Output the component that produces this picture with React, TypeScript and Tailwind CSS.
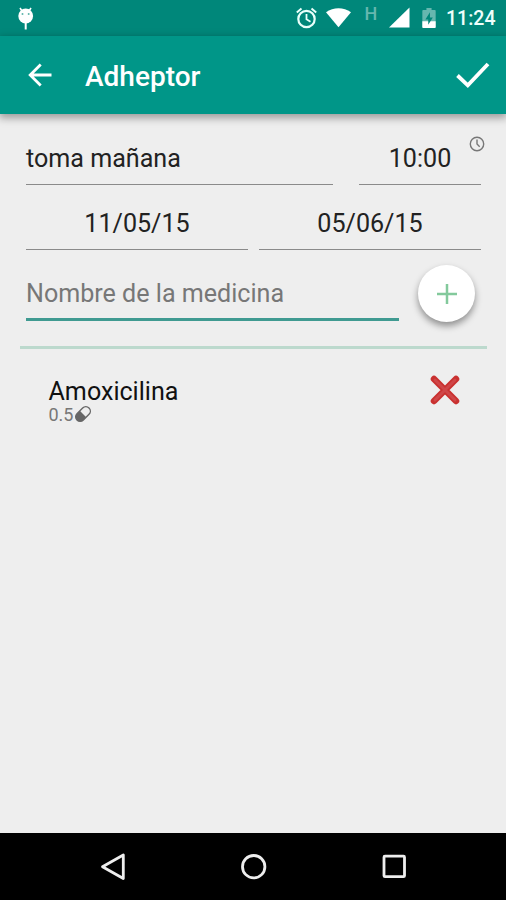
import type { ReactNode } from "react";

function StatusBar() {
    return (
        <div className="flex h-9 shrink-0 bg-[#00877a] text-white">
            <svg width="17" height="24" viewBox="0 0 17 24" className="ml-[17px] mt-[7px]">
                <path d="M3 1l2 3M14 1l-2 3" stroke="white" strokeWidth="1.6" />
                <circle cx="8.7" cy="9" r="7.4" fill="white" />
                <path d="M8.7 16v6.5" stroke="white" strokeWidth="2" />
                <circle cx="5.5" cy="7" r="1" fill="#5fb5ab" />
                <circle cx="11.7" cy="7" r="1" fill="#5fb5ab" />
            </svg>
            <svg width="22" height="22" viewBox="0 0 22 22" fill="none" stroke="#e9fffb" className="ml-[261px] mt-[7px]">
                <circle cx="11.5" cy="12" r="8.2" strokeWidth="2.2" />
                <path d="M11.5 7v5.3l4 2.4" strokeWidth="1.8" />
                <path d="M1.8 5.5L6.500 1.5M21.2 5.5L16.5 1.5" strokeWidth="2" />
            </svg>
            <svg width="27" height="20" viewBox="0 0 27 20" className="ml-[8px] mt-[8px]">
                <path d="M1 4.2C8.5 -1.2 18.5 -1.2 26 4.2L13.500 19.3z" fill="white" />
            </svg>
            <span className="ml-[12px] mt-[4px] w-[14px] text-center text-[18px] leading-[20px] font-medium text-[#66b7af]">H</span>
            <svg width="21" height="21" viewBox="0 0 21 21" className="ml-[11px] mt-[7px]">
                <path d="M20.5 .5v20H0z" fill="white" />
            </svg>
            <svg width="14" height="20" viewBox="0 0 14 21" className="ml-[12px] mt-[8px]">
                <path d="M4.3 0h5.4v2H13a1 1 0 0 1 1 1v17a1 1 0 0 1-1 1H1a1 1 0 0 1-1-1V3a1 1 0 0 1 1-1h3.3z" fill="#66b7af" />
                <path d="M0 14h14v6a1 1 0 0 1-1 1H1a1 1 0 0 1-1-1z" fill="white" />
                <path d="M8 4.5L3.2 12h3v5.5L11 10H8z" fill="#00877a" />
            </svg>
            <span className="ml-[10px] mt-[7px] text-[19.5px] leading-[24px] font-medium text-[#effffc]">11:24</span>
        </div>
    );
}

function AppBar() {
    return (
        <header className="z-10 flex h-[78px] shrink-0 items-center bg-[#009688] pb-px text-white shadow-[0_3px_8px_1px_rgba(0,0,0,0.35)]">
            <svg width="24" height="24" viewBox="0 0 24 24" fill="none" stroke="white" strokeWidth="2.8" className="ml-7">
                <path d="M23.5 12H3M12.7 1.5L2.2 12l10.5 10.5" />
            </svg>
            <h1 className="ml-[33px] pt-1 text-[28px] leading-8 font-medium">Adheptor</h1>
            <svg width="36" height="28" viewBox="0 0 36 28" fill="none" stroke="white" strokeWidth="3.8" className="mr-[15px] ml-auto">
                <path d="M2.5 14.500l10.300 9.800L33 3" />
            </svg>
        </header>
    );
}

function Field({ className, children }: { className: string; children: ReactNode }) {
    return (
        <div className={`relative h-[42px] border-b-[1.5px] border-[#8a8a8a] pt-px text-[25.1px] leading-[30px] text-[#222] ${className}`}>
            {children}
        </div>
    );
}

function PillIcon() {
    return (
        <svg width="18" height="18" viewBox="0 0 18 18" className="ml-px">
            <g transform="rotate(-45 9 9)">
                <path d="M9 4.5H5a4.5 4.5 0 0 0 0 9h4z" fill="#666" />
                <rect x=".5" y="4.5" width="17" height="9" rx="4.5" fill="none" stroke="#666" strokeWidth="1.4" />
            </g>
        </svg>
    );
}

function Medicine({ name, dose }: { name: string; dose: string }) {
    return (
        <div className="flex justify-between pt-[26px] pr-[46px] pl-[48.5px]">
            <div className="pt-[2px]">
                <p className="text-[25.1px] leading-[30px] text-[#111]">{name}</p>
                <div className="-mt-[2px] flex text-[18px] leading-5 text-[#777]">
                    {dose}
                    <PillIcon />
                </div>
            </div>
            <svg width="30" height="30" viewBox="0 0 30 30" fill="none" strokeLinecap="round">
                <path d="M4 4l22 22M26 4L4 26" stroke="#c9302f" strokeWidth="6.5" />
                <path d="M5 5l20 20M25 5L5 25" stroke="#cf4648" strokeWidth="3" />
            </svg>
        </div>
    );
}

function NavBar() {
    return (
        <nav className="h-[67px] shrink-0 bg-black">
            <svg width="506" height="67" viewBox="0 0 506 67" fill="none" stroke="#eee" strokeWidth="2.8" strokeLinejoin="round">
                <path d="M123.3 22v23.500L102.5 33.7z" />
                <circle cx="253.7" cy="33.7" r="11.2" />
                <rect x="384" y="23.2" width="20.500" height="20.500" rx="1" />
            </svg>
        </nav>
    );
}

export default function App() {
    return (
        <div className="flex h-[900px] w-[506px] flex-col overflow-hidden bg-[#eee] font-['Roboto',sans-serif]">
            <StatusBar />
            <AppBar />
            <main className="flex-1">
                <div className="flex justify-between pt-[29px] pr-[25px] pl-[26px]">
                    <Field className="w-[307px]">toma mañana</Field>
                    <Field className="w-[122px] text-center">
                        10:00
                        <svg width="16" height="16" viewBox="0 0 16 16" fill="none" stroke="#777" className="absolute -top-[7px] -right-1">
                            <circle cx="8" cy="8" r="6.7" strokeWidth="1.4" />
                            <path d="M8 3.5V8l2.7 2.7" strokeWidth="1.4" />
                        </svg>
                    </Field>
                </div>
                <div className="flex justify-between pt-[23px] pr-[25px] pl-[26px]">
                    <Field className="w-[222px] text-center">11/05/15</Field>
                    <Field className="w-[222px] text-center">05/06/15</Field>
                </div>
                <div className="flex pt-[15px] pl-[26px]">
                    <div className="mt-[13px] h-[43px] w-[373px] border-b-[3px] border-[#3f9a91] pt-px text-[25.1px] leading-[30px] text-[#777]">
                        Nombre de la medicina
                    </div>
                    <button className="ml-[19px] flex size-[57px] items-center justify-center rounded-full bg-white shadow-[0_4px_7px_rgba(0,0,0,0.4)]">
                        <svg width="20" height="20" viewBox="0 0 20 20" stroke="#83c99c" strokeWidth="2.5">
                            <path d="M10 0v20M0 10h20" />
                        </svg>
                    </button>
                </div>
                <div className="mt-6 mr-[19px] ml-5 h-[3px] bg-[#bcd9cd]" />
                <Medicine name="Amoxicilina" dose="0.5" />
            </main>
            <NavBar />
        </div>
    );
}
